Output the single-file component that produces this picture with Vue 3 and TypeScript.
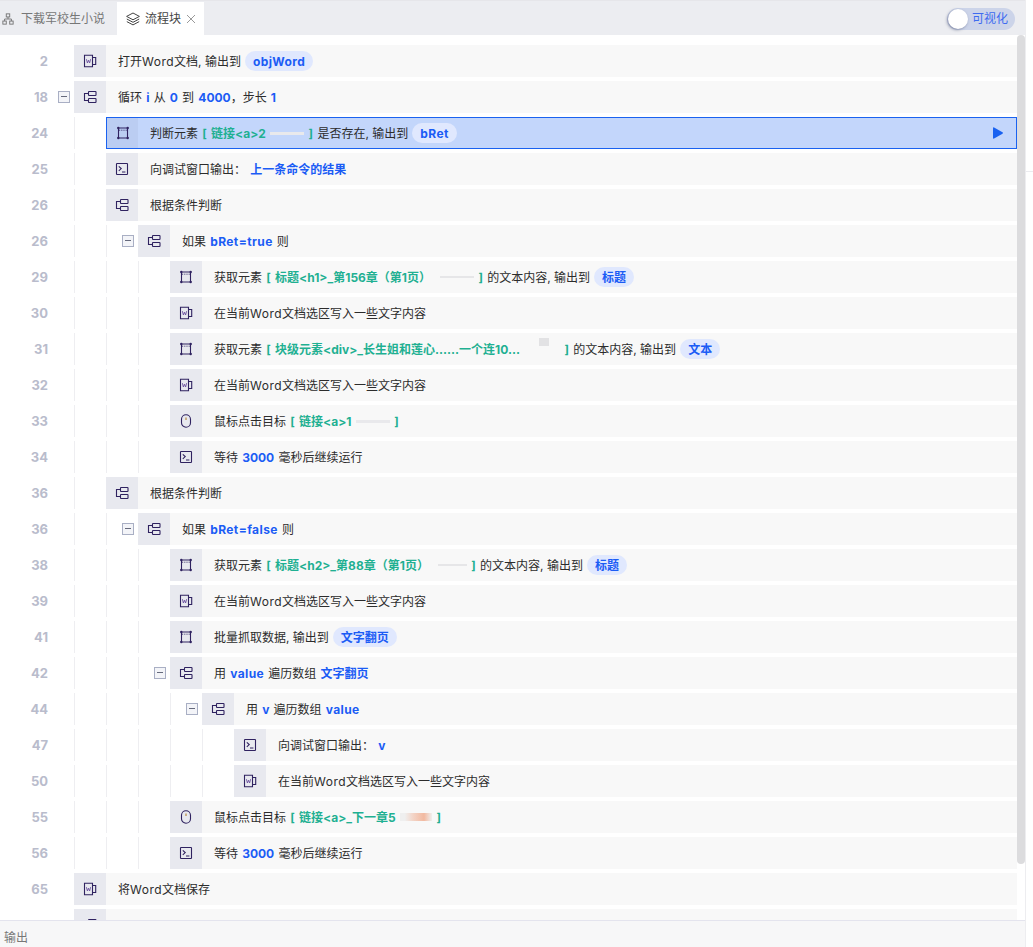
<script setup lang="ts">
type Seg = { t?: string; k?: string; w?: number; v?: string }
type Row = { n: number; lvl: number; icon: string; fold?: boolean; sel?: boolean; segs: Seg[] }

const T = (t: string): Seg => ({ t })
const C = (t: string): Seg => ({ t, k: 'c' })
const L = (t: string): Seg => ({ t, k: 'l' })
const B = (t: string): Seg => ({ t, k: 'b' })
const BL = (t: string): Seg => ({ t, k: 'b bl' })
const G = (t: string): Seg => ({ t, k: 'g' })
const P = (t: string): Seg => ({ t, k: 'p' })
const PL = (t: string): Seg => ({ t, k: 'p bl' })
const X = (w: number, v = 'line'): Seg => ({ k: 'blur', w, v })
const writeText = [T('在当前'), L('Word'), T('文档选区写入一些文字内容')]
const wait = [T('等待 '), B('3000'), T(' 毫秒后继续运行')]

const rows: Row[] = [
  { n: 2, lvl: 0, icon: 'word', segs: [T('打开'), L('Word'), C('文档, 输出到'), PL('objWord')] },
  { n: 18, lvl: 0, icon: 'flow', fold: true, segs: [T('循环 '), B('i'), T(' 从 '), B('0'), T(' 到 '), B('4000'), T('，步长 '), B('1')] },
  { n: 24, lvl: 1, icon: 'el', sel: true, segs: [T('判断元素 '), G('[ 链接<a>2 '), X(34), G(' ] '), C('是否存在, 输出到'), PL('bRet')] },
  { n: 25, lvl: 1, icon: 'term', segs: [T('向调试窗口输出： '), B('上一条命令的结果')] },
  { n: 26, lvl: 1, icon: 'flow', segs: [T('根据条件判断')] },
  { n: 26, lvl: 2, icon: 'flow', fold: true, segs: [T('如果 '), BL('bRet=true'), T(' 则')] },
  { n: 29, lvl: 3, icon: 'el', segs: [T('获取元素 '), G('[ 标题<h1>_第156章（第1页）'), X(43, 'gap'), G(' ] '), C('的文本内容, 输出到'), P('标题')] },
  { n: 30, lvl: 3, icon: 'word', segs: writeText },
  { n: 31, lvl: 3, icon: 'el', segs: [T('获取元素 '), G('[ 块级元素<div>_长生姐和莲心......一个连10...'), X(40, 'patch'), G(' ] '), C('的文本内容, 输出到'), P('文本')] },
  { n: 32, lvl: 3, icon: 'word', segs: writeText },
  { n: 33, lvl: 3, icon: 'mouse', segs: [T('鼠标点击目标 '), G('[ 链接<a>1 '), X(34), G(' ]')] },
  { n: 34, lvl: 3, icon: 'term', segs: wait },
  { n: 36, lvl: 1, icon: 'flow', segs: [T('根据条件判断')] },
  { n: 36, lvl: 2, icon: 'flow', fold: true, segs: [T('如果 '), BL('bRet=false'), T(' 则')] },
  { n: 38, lvl: 3, icon: 'el', segs: [T('获取元素 '), G('[ 标题<h2>_第88章（第1页）'), X(38, 'gap'), G(' ] '), C('的文本内容, 输出到'), P('标题')] },
  { n: 39, lvl: 3, icon: 'word', segs: writeText },
  { n: 41, lvl: 3, icon: 'el', segs: [C('批量抓取数据, 输出到'), P('文字翻页')] },
  { n: 42, lvl: 3, icon: 'flow', fold: true, segs: [T('用 '), BL('value'), T(' 遍历数组 '), B('文字翻页')] },
  { n: 44, lvl: 4, icon: 'flow', fold: true, segs: [T('用 '), B('v'), T(' 遍历数组 '), BL('value')] },
  { n: 47, lvl: 5, icon: 'term', segs: [T('向调试窗口输出： '), B('v')] },
  { n: 50, lvl: 5, icon: 'word', segs: writeText },
  { n: 55, lvl: 3, icon: 'mouse', segs: [T('鼠标点击目标 '), G('[ 链接<a>_下一章5 '), X(32, 'orange'), G(' ]')] },
  { n: 56, lvl: 3, icon: 'term', segs: wait },
  { n: 65, lvl: 0, icon: 'word', segs: [T('将'), L('Word'), T('文档保存')] },
  { n: 0, lvl: 0, icon: 'flow', segs: [] }
]
</script>

<template>
  <div class="page">
    <main class="main">
      <header class="tabbar">
        <div class="tab">
          <svg class="tab-ico" viewBox="0 0 14 14" fill="none" stroke="#777" stroke-width="1.1">
            <rect x="5" y="1" width="4" height="3.6" />
            <rect x="1" y="9.4" width="4" height="3.6" />
            <rect x="9" y="9.4" width="4" height="3.6" />
            <path d="M7 4.6V7M3 9.4V7h8v2.4" />
          </svg>
          <span>下载军校生小说</span>
        </div>
        <div class="tab active">
          <svg class="tab-ico layers" viewBox="0 0 14 14" fill="none" stroke="#444" stroke-width="1" stroke-linejoin="round">
            <path d="M7 1 13.4 4.4 7 7.8 .6 4.4Z" />
            <path d="M.8 7 7 10.3 13.2 7" />
            <path d="M.8 9.6 7 12.9 13.2 9.6" />
          </svg>
          <span>流程块</span>
          <svg class="close" viewBox="0 0 10 10" stroke="#999" stroke-width="1"><path d="M1 1l8 8M9 1l-8 8" /></svg>
        </div>
        <div class="toggle">
          <span class="knob"></span>
          <span class="toggle-text">可视化</span>
        </div>
      </header>

      <div class="body">
        <div class="list">
          <div v-for="(r, i) in rows" :key="i" class="row" :class="{ sel: r.sel }">
            <span class="num">{{ r.n || '' }}</span>
            <span class="lead">
              <span v-if="r.fold && r.lvl === 0" class="fold"></span>
            </span>
            <span v-for="s in r.lvl" :key="s" class="slot">
              <span v-if="r.fold && s === r.lvl" class="fold"></span>
            </span>
            <div class="card">
              <span class="ico">
                <svg viewBox="0 0 14 14" fill="none" stroke="#2f2260" stroke-width="1.1">
                  <template v-if="r.icon === 'word'">
                    <path d="M1.5 1.2h8v11.6h-8z" />
                    <path d="M9.5 3.5h3.2v7H9.5" />
                    <path d="M3.4 5.2l1 3.8 1.1-2.8 1.1 2.8 1-3.8" stroke-width=".9" stroke="#6a4f9e" />
                  </template>
                  <template v-else-if="r.icon === 'flow'">
                    <rect x="5.5" y="1.5" width="7.5" height="4" rx=".6" />
                    <rect x="5.5" y="8.5" width="7.5" height="4" rx=".6" />
                    <path d="M5.5 3.5H1.5v7h4" />
                  </template>
                  <template v-else-if="r.icon === 'el'">
                    <path d="M2.5 2h9M2.5 12h9M2.5 2v10M11.5 2v10" />
                    <path d="M3 4.2h8" stroke-dasharray="1.2 1" stroke-width=".8" />
                    <circle cx="2.3" cy="2" r="1.2" fill="#2f2260" stroke="none" />
                    <circle cx="11.7" cy="2" r="1.2" fill="#2f2260" stroke="none" />
                    <circle cx="2.3" cy="12" r="1.2" fill="#2f2260" stroke="none" />
                    <circle cx="11.7" cy="12" r="1.2" fill="#2f2260" stroke="none" />
                  </template>
                  <template v-else-if="r.icon === 'term'">
                    <rect x="1.5" y="1.5" width="11" height="11" rx=".6" />
                    <path d="M3.8 4.4 6.2 6.6 3.8 8.8M7 10h3.4" />
                  </template>
                  <template v-else>
                    <rect x="2.5" y=".8" width="9" height="12.4" rx="4.5" />
                    <path d="M7 3.4v2.6" stroke="#b5893c" stroke-width="1.2" />
                  </template>
                </svg>
              </span>
              <div class="txt">
                <template v-for="(s, j) in r.segs" :key="j">
                  <span v-if="s.k === 'blur'" class="blur" :class="s.v" :style="{ width: s.w + 'px' }"></span>
                  <span v-else :class="s.k">{{ s.t }}</span>
                </template>
              </div>
              <svg v-if="r.sel" class="play" viewBox="0 0 10 12"><path d="M0 1.2Q0 0 1.1.5L9.5 5.3Q10.4 6 9.5 6.7L1.1 11.5Q0 12 0 10.8Z" fill="#1a62f0" /></svg>
            </div>
          </div>
        </div>
        <div class="track"><div class="thumb"></div></div>
      </div>

      <footer class="output">输出</footer>
    </main>
    <aside class="side"><div class="side-line"></div></aside>
  </div>
</template>

<style>
html, body { margin: 0; background: #fff; }
</style>

<style scoped>
.page {
  display: flex;
  width: 1033px;
  height: 947px;
  overflow: hidden;
  font: 12px/16px Inter, "Noto Sans CJK SC", sans-serif;
  color: #2c2c2c;
}
.main {
  width: 1026px;
  height: 947px;
  display: flex;
  flex-direction: column;
  border-right: 1px solid #ededf0;
  box-sizing: border-box;
}
.side { flex: 1; padding-top: 171px; }
.side-line { height: 1px; background: #ebebef; }

.tabbar {
  height: 35px;
  flex: none;
  box-sizing: border-box;
  padding-top: 1px;
  border-top: 1px solid #e6e6ea;
  background: #ecedf1;
  display: flex;
  align-items: stretch;
}
.tab {
  display: flex;
  align-items: center;
  padding-left: 2px;
  width: 117px;
  box-sizing: border-box;
  color: #777;
}
.tab-ico { width: 12px; height: 12px; margin-right: 7px; }
.layers { width: 14px; height: 14px; margin-right: 5px; }
.tab.active {
  width: 87px;
  padding-left: 9px;
  background: #fff;
  color: #444;
}
.close { width: 10px; height: 10px; margin-left: 5px; }
.toggle {
  margin: 6px 10px 5px auto;
  width: 68px;
  height: 22px;
  border-radius: 11px;
  background: #ccd4e9;
  display: flex;
  align-items: center;
  padding-left: 1px;
  box-sizing: border-box;
}
.knob {
  width: 20px;
  height: 20px;
  border-radius: 50%;
  background: #fff;
  box-shadow: -1px 1px 3px rgba(60, 70, 110, .55);
}
.toggle-text { margin-left: 4px; color: #3d6bf0; }

.body { flex: 1; min-height: 0; display: flex; overflow: hidden; }
.list {
  flex: 1;
  min-width: 0;
  padding-top: 10px;
  display: flex;
  flex-direction: column;
  gap: 4px;
}
.track { width: 8px; flex: none; }
.thumb { height: 829px; background: #dcdcde; border-radius: 4px; }

.row { display: flex; height: 32px; flex: none; }
.num {
  width: 48px;
  flex: none;
  text-align: right;
  font-size: 13px;
  font-weight: 700;
  line-height: 32px;
  color: #b9bccc;
}
.lead {
  width: 26px;
  flex: none;
  display: flex;
  align-items: center;
  justify-content: flex-end;
}
.slot {
  width: 32px;
  flex: none;
  box-sizing: border-box;
  border-left: 1px solid #eeeef1;
  display: flex;
  align-items: center;
  justify-content: flex-end;
}
.fold {
  width: 12px;
  height: 12px;
  margin-right: 4px;
  box-sizing: border-box;
  border: 1px solid #a9afc4;
  position: relative;
  background: #f3f4f8;
}
.fold::after {
  content: "";
  position: absolute;
  left: 2px;
  right: 2px;
  top: 4px;
  height: 1px;
  background: #666a7c;
}
.card {
  flex: 1;
  min-width: 0;
  display: flex;
  align-items: center;
  background: #f8f8f8;
  box-sizing: border-box;
}
.ico {
  width: 32px;
  height: 100%;
  flex: none;
  background: #e8e9ef;
  display: flex;
  align-items: center;
  justify-content: center;
}
.ico svg { width: 14px; height: 14px; }
.txt {
  flex: 1;
  min-width: 0;
  padding: 2px 0 0 12px;
  display: flex;
  align-items: center;
  white-space: pre;
  word-spacing: .8px;
}
.c { word-spacing: 0; }
.l { letter-spacing: .5px; }
.b { font-weight: 700; color: #1b5cf5; }
.bl { letter-spacing: .4px; }
.g { font-weight: 700; color: #1fb092; word-spacing: 1.5px; }
.p {
  margin: -2px 0 0 4px;
  padding: 0 8px;
  height: 20px;
  line-height: 22px;
  border-radius: 10px;
  background: #e0e8fe;
  font-weight: 700;
  color: #1b5cf5;
}
.blur { height: 12px; display: block; flex: none; }
.line {
  height: 3px;
  margin-top: -2px;
  background: #e9e9ec;
}
.gap {
  height: 2px;
  margin-top: -2px;
  background: linear-gradient(90deg, transparent 9px, #e6e6e8 9px, #e6e6e8 100%);
}
.patch {
  height: 8px;
  margin-top: -16px;
  background: linear-gradient(90deg, transparent 19px, #e2e2e4 19px, #e2e2e4 29px, transparent 29px);
}
.orange {
  height: 8px;
  margin-top: -2px;
  background: linear-gradient(90deg, #efefef 15%, #f3d5c8 40%, #f2b9a0 75%, #efefef 100%);
}

.row.sel .card {
  background: #c3d6fb;
  outline: 1px solid #1a62f0;
  outline-offset: -1px;
}
.row.sel .ico { background: #bbcdf2; margin: 1px 0 1px 1px; height: 30px; width: 31px; }
.play { width: 10px; height: 12px; margin-right: 14px; flex: none; }

.output {
  height: 27px;
  flex: none;
  box-sizing: border-box;
  border-top: 1px solid #e4e4ee;
  background: #f7f7f8;
  padding: 9px 0 0 4px;
  color: #777;
}
</style>
